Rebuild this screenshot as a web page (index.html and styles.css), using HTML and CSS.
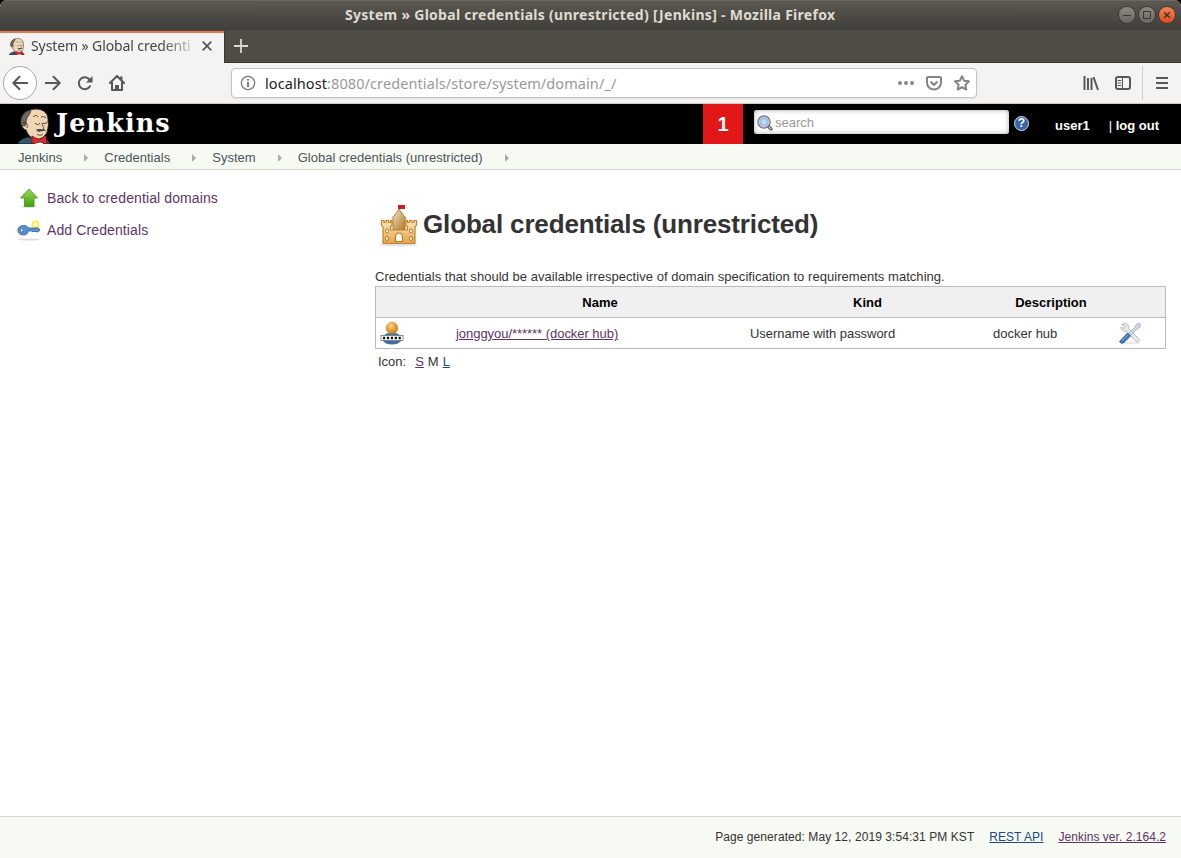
FILE: index.html
```html
<!DOCTYPE html>
<html lang="en">
<head>
<meta charset="utf-8">
<title>System » Global credentials (unrestricted) [Jenkins]</title>
<link rel="stylesheet" href="styles.css">
</head>
<body>
<svg class="defs" width="0" height="0">
  <defs>
    <linearGradient id="castleGrad" x1="0" y1="0" x2="0" y2="1"><stop offset="0" stop-color="#fbe6bd"/><stop offset="1" stop-color="#e3a54a"/></linearGradient>
    <linearGradient id="towerGrad" x1="0" y1="0" x2="1" y2="1"><stop offset="0" stop-color="#f7ead6"/><stop offset="1" stop-color="#a8741c"/></linearGradient>
    <linearGradient id="greenGrad" x1="0" y1="0" x2="0" y2="1"><stop offset="0" stop-color="#9bd85a"/><stop offset="1" stop-color="#3fa208"/></linearGradient>
    <radialGradient id="headGrad" cx=".4" cy=".3" r=".7"><stop offset="0" stop-color="#fbd48c"/><stop offset="1" stop-color="#cf7a08"/></radialGradient>
    <radialGradient id="lensGrad"><stop offset="0" stop-color="#d5e8fa"/><stop offset="1" stop-color="#78a8dc"/></radialGradient>
    <symbol id="butler" viewBox="0 0 33 36">
      <path d="M0 36c1-4 4-5 10-7l14 1c5 1 7 3 8 6z" fill="#31566c" stroke="#12222c"/>
      <path d="M13 28l4 8h8l2-8z" fill="#fff"/>
      <path d="M4 13C5 4 12 1 18 1c8 0 13 5 12 13 1 2 0 4 0 6-1 7-5 11-11 11-6 0-9-4-11-9-4-1-5-6-4-9z" fill="#f1d6b5" stroke="#2a2320"/>
      <path d="M3 17C2 9 5 4 12 2c2 0 0 3-1 5-2 2-3 5-3 8l-1 3-4-1z" fill="#6b6866" stroke="#2a2320" stroke-width=".7"/>
      <path d="M5 15c3-2 5 1 4 5M15 9c2-2 4-2 5 0M23 9c2-1 4 0 5 1M17 15c1 2 4 2 5 0M25 15c1 1 3 1 4-1M24 15c0 3 3 4 1 6" fill="none" stroke="#2a2320" stroke-width=".8"/>
      <path d="M18 22c3-2 5 0 7-1 2 0 3 1 3 2-4-1-7 3-10-1z" fill="#4c4440"/>
      <path d="M19 26c2 2 5 1 6 0" fill="none" stroke="#2a2320" stroke-width=".8"/>
      <path d="M14 28l7 4 7-4 1 8-7-2-8 2z" fill="#dc2c2c" stroke="#781010" stroke-width=".8"/>
    </symbol>
  </defs>
</svg>

<div class="window">
  <header class="titlebar">
    <div class="window-title">System » Global credentials (unrestricted) [Jenkins] - Mozilla Firefox</div>
    <div class="window-buttons">
      <span class="wbtn"><svg viewBox="0 0 16 16"><path d="M4 8.500h8" /></svg></span>
      <span class="wbtn"><svg viewBox="0 0 16 16"><path d="M4.500 4.500h7v7h-7z"/></svg></span>
      <span class="wbtn wbtn-close"><svg viewBox="0 0 16 16"><path d="M5.200 5.200l5.600 5.600M10.800 5.200l-5.600 5.600"/></svg></span>
    </div>
  </header>

  <div class="tabstrip">
    <div class="tab">
      <svg class="tab-icon" viewBox="0 0 33 36"><use href="#butler"/></svg>
      <span class="tab-label">System » Global credenti</span>
      <svg class="tab-close" viewBox="0 0 10 10"><path d="M.7.700l8.600 8.600M9.300.700L.7 9.300"/></svg>
    </div>
    <svg class="tab-new" viewBox="0 0 14 14"><path d="M7 0v14M0 7h14"/></svg>
  </div>

  <nav class="toolbar">
    <span class="back"><svg class="ico" viewBox="0 0 16 16"><path d="M15.500 8H1.500M7.500 1.800L1.300 8l6.200 6.200"/></svg></span>
    <svg class="ico" viewBox="0 0 16 16"><path d="M.500 8h14M8.500 1.800L14.700 8l-6.200 6.200"/></svg>
    <svg class="ico reload" viewBox="0 0 16 16"><path d="M13 11.200A6 6 0 1 1 12.400 4.300"/><path d="M15.500 1v6.500H9z" class="solid"/></svg>
    <svg class="ico" viewBox="0 0 16 16"><path d="M.900 8L8 1l7.100 7M3 7.500V15h10V7.500"/><path d="M6 15v-5h4v5zM11 1.500h2.500V5L11 3z" class="solid"/></svg>
    <div class="urlbar">
      <svg class="info" viewBox="0 0 16 16"><circle cx="8" cy="8" r="6.700"/><path d="M8 7v5M8 4v1.800" stroke-width="1.800"/></svg>
      <span class="url"><b>localhost</b>:8080/credentials/store/system/domain/_/</span>
      <svg class="uico dots" viewBox="0 0 16 16"><circle cx="2" cy="8" r="2"/><circle cx="8" cy="8" r="2"/><circle cx="14" cy="8" r="2"/></svg>
      <svg class="uico" viewBox="0 0 16 16"><path d="M2 2h12q1 0 1 1v4.500a7 7 0 0 1-14 0V3q0-1 1-1zM4.500 6.500L8 10l3.500-3.500"/></svg>
      <svg class="uico" viewBox="0 0 16 16"><path d="M8 1.200l2.100 4.500 4.900.600-3.600 3.400.9 4.900L8 12.200l-4.300 2.400.9-4.900L1 6.300l4.900-.6z"/></svg>
    </div>
    <div class="toolbar-end">
      <svg class="ico library" viewBox="0 0 16 16"><path d="M1.500 1v14M5 3v12M8.500 3v12M10.500 2l4.500 13"/></svg>
      <svg class="ico" viewBox="0 0 16 16"><rect x="1" y="2" width="14" height="12" rx="2"/><path d="M7.500 2v12M3 5.500h3M3 8h3M3 10.500h3" stroke-width="1"/></svg>
      <span class="divider"></span>
      <svg class="ico menu" viewBox="0 0 12 12"><path d="M.600 1h11M.600 6h11M.600 11h11"/></svg>
    </div>
  </nav>

  <div class="jheader">
    <svg class="logo-face" viewBox="0 0 33 36"><use href="#butler"/></svg>
    <span class="logo-text">Jenkins</span>
    <span class="alert">1</span>
    <div class="search">
      <svg viewBox="0 0 16 16"><path d="M11.500 11.500l2.500 2.500" stroke="#777" stroke-width="3.500" stroke-linecap="round"/><path d="M12 12l2 2" stroke="#ccc" stroke-width="1"/><circle cx="7" cy="7" r="6" fill="url(#lensGrad)" stroke="#777" stroke-width="1.500"/><circle cx="7" cy="7" r="5" fill="none" stroke="#dfeaf5" stroke-width=".7"/></svg>
      <span>search</span>
    </div>
    <span class="help">?</span>
    <a class="user">user1</a>
    <span class="logout">| <a>log out</a></span>
  </div>

  <div class="crumbs">
    <a>Jenkins</a><i></i><a>Credentials</a><i></i><a>System</a><i></i><a>Global credentials (unrestricted)</a><i></i>
  </div>

  <div class="page">
    <aside class="side">
      <a class="task"><svg viewBox="0 0 24 24"><ellipse cx="12" cy="20.500" rx="8" ry="1.500" fill="#ddd"/><path d="M12 3l8.500 9H17v8.500H7.500V12h-4z" fill="url(#greenGrad)" stroke="#459320" stroke-width=".8"/></svg>Back to credential domains</a>
      <a class="task"><svg viewBox="0 0 24 24"><ellipse cx="12" cy="21.500" rx="11" ry="1" fill="#ddd"/><circle cx="18.500" cy="6.500" r="3" fill="#fffbc0" stroke="#f9ee55" stroke-width="2"/><path d="M6.500 7.500c3 0 4 1 5 2.500h10l1.500 2-2 2h-1l-1-1-1 1-1-1-1 1-1-1h-3.500c-1 3-2.500 4-5 4-7.500 0-7.500-9.500 0-9.500z" fill="#5a90cb" stroke="#2b5f9f" stroke-width=".8"/><ellipse cx="4.800" cy="12.300" rx="1.200" ry="2" fill="#fff" stroke="#2b5f9f" stroke-width=".8"/></svg>Add Credentials</a>
    </aside>

    <main class="main">
      <h1><svg viewBox="0 0 48 48"><ellipse cx="24" cy="45" rx="19" ry="1.500" fill="#e4e4e4"/>
        <path d="M24 11V5" stroke="#8b6a2c"/><path d="M23 5h7v4h-7z" fill="#d9151e"/>
        <path d="M18 30V19.500l-1-1L24 9.500l7 9-1 1V30z" fill="url(#towerGrad)" stroke="#b57a20"/>
        <path d="M8 43.500V27l-1.500-2v-4.500h2.500v2h2v-2h2.500v2h2v-2H17V25l-1.500 2v3h17v-3L31 25v-4.500h1.500v2h2v-2H37v2h2v-2h2.500V25L40 27v16.500z" fill="url(#castleGrad)" stroke="#c1842a" stroke-width="1.200"/>
        <path d="M20.500 41.500V37q0-4 3.500-4t3.500 4v4.500z" fill="#fff" stroke="#b57a20" stroke-width="1.200"/>
        <g fill="#fff3d8" stroke="#b57a20"><rect x="10.500" y="29" width="3" height="4" rx="1.500"/><rect x="34.500" y="29" width="3" height="4" rx="1.500"/><rect x="10.500" y="36.500" width="3" height="4" rx="1.500"/><rect x="34.500" y="36.500" width="3" height="4" rx="1.500"/></g></svg><span>Global credentials (unrestricted)</span></h1>
      <p class="desc">Credentials that should be available irrespective of domain specification to requirements matching.</p>
      <div class="table">
        <div class="row head"><span></span><span>Name</span><span>Kind</span><span>Description</span><span></span></div>
        <div class="row">
          <span class="cell-user"><svg viewBox="0 0 24 24"><path d="M3 17q1-5 7-5h4q6 0 7 5v3q-3 3.500-9 3.500T3 20z" fill="#3b6faf"/><circle cx="12" cy="7" r="5.800" fill="url(#headGrad)" stroke="#c9811f" stroke-width=".6"/><rect x="1" y="14.500" width="22" height="5" fill="#fff" stroke="#777" stroke-width=".8"/><path d="M3 17h18" stroke="#111" stroke-width="2.600" stroke-dasharray="2.200 1.700"/></svg></span>
          <span><a class="visited user-link">jonggyou/****** (docker hub)</a></span>
          <span class="kind">Username with password</span>
          <span>docker hub</span>
          <span class="cell-tools"><svg viewBox="0 0 24 24"><ellipse cx="12" cy="22" rx="10" ry="1" fill="#e8e8e8"/><path d="M3.500 3.500l3-1c3 0 5 2 4 5l10 10q2 3-1 3.500l-1.500-.5L8.500 10c-3 1-6-1-5.500-4l3 1.500 1.500-2z" fill="#e8eaea" stroke="#b2b5b6" stroke-width=".9"/><path d="M21 2l1.500 1.500-1 3-3 2-6 6-2-2 6-6 2-3z" fill="#cbd8e8" stroke="#93a5bb" stroke-width=".8"/><path d="M9.500 12l3 3-7 7q-3 1-4-1.500z" fill="#3f74bd" stroke="#28579a" stroke-width=".8"/><path d="M4 20l6-6" stroke="#86aee0"/></svg></span>
        </div>
      </div>
      <div class="sizes">Icon: <a class="visited">S</a><span>M</span><a class="fresh">L</a></div>
    </main>
  </div>

  <footer class="foot"><span class="generated">Page generated: May 12, 2019 3:54:31 PM KST</span><a class="fresh">REST API</a><a class="visited">Jenkins ver. 2.164.2</a></footer>
</div>
</body>
</html>
```
FILE: styles.css
```css
* { box-sizing: border-box; }
body { margin: 0; background: #000; font: 13px/16px "Liberation Sans", Arial, sans-serif; color: #333; }
svg { display: block; flex: none; }
.defs { position: absolute; }
.window { width: 1181px; height: 858px; display: flex; flex-direction: column; background: #fff; border-radius: 7px 7px 0 0; overflow: hidden; }

.titlebar { height: 30px; display: grid; grid-template-columns: 1fr auto 1fr; align-items: center; background: linear-gradient(#5c5952, #403e39); box-shadow: inset 0 1px #6b6862; font-family: "Noto Sans", "Open Sans", sans-serif; }
.window-title { grid-column: 2; width: 491px; white-space: nowrap; font-size: 14px; font-weight: 700; letter-spacing: .28px; color: #dfdbd2; }
.window-buttons { display: flex; justify-content: flex-end; gap: 4px; padding-right: 6px; }
.wbtn { width: 16px; height: 16px; border-radius: 50%; background: linear-gradient(#8c8982, #696761); box-shadow: 0 0 0 1px #3a3833; }
.wbtn svg { width: 16px; height: 16px; fill: none; stroke: #3a3833; }
.wbtn-close { background: linear-gradient(#f4835d, #df4a18); }
.wbtn-close svg { stroke-width: 1.5; }

.tabstrip { height: 33px; display: flex; background: #4f4c45; border-bottom: 1px solid #393731; font-family: "Noto Sans", "Open Sans", sans-serif; }
.tab { width: 225px; height: 33px; display: flex; align-items: center; padding: 0 12px 2px 9px; background: #f4f3f2; border-top: 1px solid #4f4c45; border-right: 1px solid #393731; box-shadow: inset 0 2px #e9764c; }
.tab-icon { width: 16px; height: 17px; }
.tab-label { width: 165px; margin-left: 6px; white-space: nowrap; font-size: 14px; line-height: 22px; letter-spacing: -.1px; color: #444; -webkit-mask-image: linear-gradient(90deg, #000 130px, transparent 169px); mask-image: linear-gradient(90deg, #000 130px, transparent 169px); }
.tab-close { width: 10px; height: 10px; margin-left: 6px; fill: none; stroke: #555; stroke-width: 1.7; }
.tab-new { width: 14px; height: 14px; margin: 9px 0 0 9px; fill: none; stroke: #dad8d3; stroke-width: 1.8; }

.toolbar { height: 41px; display: flex; align-items: center; padding: 0 13px 0 3px; background: #f4f3f2; border-bottom: 1px solid #ccc; }
.ico { width: 16px; height: 16px; margin-right: 16px; fill: none; stroke: #58585a; stroke-width: 2; stroke-linejoin: round; stroke-linecap: round; }
.solid { fill: #58585a; stroke: none; }
.back { width: 34px; height: 34px; margin-right: 8px; border: 1px solid #aaa; border-radius: 50%; background: #fff; display: grid; place-items: center; }
.back .ico { margin: 0; }
.urlbar { width: 746px; height: 30px; margin-left: 90px; padding: 0 6px 0 8px; display: flex; align-items: center; background: #fff; border: 1px solid #c5c3c1; border-radius: 4px; box-shadow: 0 1px 2px #0001; }
.info { width: 16px; height: 16px; fill: none; stroke: #777; stroke-width: 1.2; }
.url { flex: 1; margin-left: 9px; white-space: nowrap; font: 14.5px/22px "Noto Sans", "Open Sans", sans-serif; letter-spacing: .09px; color: #999; }
.url b { font-weight: 400; color: #222; }
.uico { width: 16px; height: 16px; margin-left: 12px; fill: none; stroke: #858585; stroke-width: 2; stroke-linejoin: round; }
.dots { fill: #858585; stroke: none; }
.toolbar-end { flex: 1; display: flex; align-items: center; justify-content: flex-end; }
.toolbar-end .ico:nth-child(2) { margin-right: 11px; }
.library { stroke-linecap: butt; }
.divider { width: 1px; height: 34px; background: #d1d0cf; margin-right: 13px; }
.toolbar-end .menu { width: 12px; height: 12px; margin: 0; }

.jheader { height: 40px; display: flex; align-items: flex-start; padding-left: 18px; background: #000; color: #fff; font-weight: 700; }
.logo-face { width: 33px; height: 36px; margin-top: 4px; }
.logo-text { flex: none; width: 647px; margin-left: 5px; font: 700 25.5px/38px "DejaVu Serif", serif; letter-spacing: 1.1px; }
.alert { flex: none; width: 40px; height: 40px; background: #e21717; text-align: center; font-size: 20px; line-height: 40px; }
.search { flex: none; width: 255px; height: 24px; margin: 6px 0 0 11px; display: flex; align-items: center; gap: 2px; padding: 1px 0 0 3px; border-radius: 3px; background: #fff; box-shadow: inset 0 0 5px #aaa; color: #999; font-weight: 400; }
.search svg { width: 16px; height: 16px; }
.help { flex: none; width: 15px; height: 15px; margin: 12px 0 0 5px; border-radius: 50%; background: #3a66a8; border: 1px solid #c9dbf0; text-align: center; font-size: 12px; line-height: 13px; }
.user { margin: 14px 0 0 26px; }
.logout { margin: 14px 0 0 19px; white-space: nowrap; font-weight: 400; }
.logout a { font-weight: 700; }

.crumbs { height: 26px; display: flex; align-items: center; padding: 2px 0 0 18px; background: #f6faf2; border-bottom: 1px solid #d3d7cf; color: #4d545d; letter-spacing: .02px; }
.crumbs i { margin: 0 16px 0 22px; border: 4px solid transparent; border-left-color: #aaa; border-right: 0; }

.page { flex: 1; display: flex; }
.side { width: 375px; padding: 16px 0 0 17px; display: flex; flex-direction: column; gap: 8px; }
.task { display: flex; align-items: center; gap: 6px; font-size: 14px; letter-spacing: .11px; color: #5c3566; }
.task svg { width: 24px; height: 24px; }
.main { width: 791px; padding-top: 30px; }
h1 { margin: 0; display: flex; align-items: center; font-size: 26px; line-height: 48px; letter-spacing: -.15px; }
h1 svg { width: 48px; height: 48px; }
.desc { margin: 21px 0 1px; letter-spacing: .04px; }
.table { border: 1px solid #bbb; }
.row { display: grid; grid-template-columns: 77px 294px 241px 126px 51px; height: 30px; align-items: center; }
.row > span { padding: 2px 0 0 5px; }
.row > span:nth-child(2), .row > span:nth-child(3) { padding-left: 3px; }
.row.head { height: 31px; background: #f0f0f0; border-bottom: 1px solid #bbb; color: #000; font-weight: 700; }
.row.head > span { padding: 2px 0 0; text-align: center; }
.row > .cell-user, .row > .cell-tools { padding: 0 0 0 4px; }
.row svg { width: 24px; height: 24px; }
.user-link, .kind { letter-spacing: -.04px; }
.visited { color: #5c3566; text-decoration: underline; }
.fresh { color: #204a87; text-decoration: underline; }
.sizes { display: flex; gap: 4px; padding: 5px 3px; }
.sizes .visited { margin-left: 5px; }

.foot { height: 42px; display: flex; align-items: center; justify-content: flex-end; gap: 15px; padding: 0 15px 2px 0; background: #f6faf2; border-top: 1px solid #d3d7cf; font-size: 12px; letter-spacing: .04px; }
.generated { letter-spacing: .07px; }
```
